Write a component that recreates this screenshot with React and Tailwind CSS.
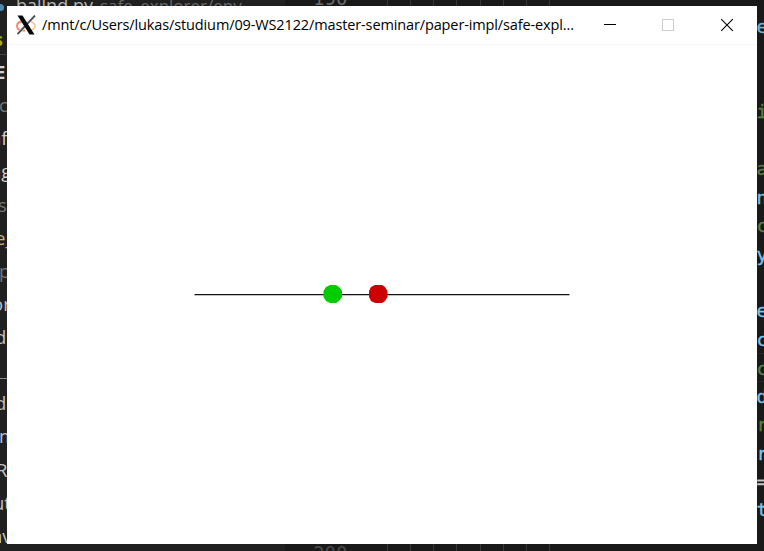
const SIDE_ROWS = [
  { text: 'E', className: '-indent-[5px] font-bold text-[#d4d4d4]' },
  { text: 'c', className: '-indent-[1px] text-[#747474]' },
  { text: 'af', className: '-indent-[9px] text-[#d0d0d0]' },
  { text: 'ag', className: '-indent-[9px] text-[#d0d0d0]' },
  { text: 's', className: '-indent-[2px] text-[#747474]' },
  { text: 'e_', className: '-indent-[5px] text-[#d2ad79]' },
  { text: 'p', className: '-indent-[1px] text-[#747474]' },
  { text: 'or', className: '-indent-[8px] text-[#c0c0c0]' },
  { text: 'd', className: '-indent-[5px] text-[#c0c0c0]' },
  { text: '', className: 'pt-[25px]' },
  { text: 'de', className: '-indent-[5px] text-[#c0c0c0]' },
  { text: 'm', className: '-indent-[1px] text-[#c0c0c0]' },
  { text: 'R', className: '-indent-[4px] text-[#c0c0c0]' },
  { text: 'ut', className: '-indent-[7px] text-[#c0c0c0]' },
  { text: 'nv', className: '-indent-[9px] text-[#c0c0c0]' },
];

const CODE_ROWS = [
  { text: 'e', className: 'text-[#6fb4d6]' },
  null,
  null,
  { text: 'i', className: 'text-[#57813f]' },
  null,
  { text: 'a', className: 'text-[#57813f]' },
  { text: 'n', className: 'text-[#7cc4ea]' },
  { text: 'c', className: 'text-[#57813f]' },
  { text: 'y', className: 'text-[#7cc4ea]' },
  null,
  { text: 'e', className: 'text-[#7cc4ea]' },
  { text: 'c', className: 'text-[#7cc4ea]' },
  { text: 'c', className: 'border-y border-[#252525] text-[#57813f]' },
  { text: 'd', className: 'text-[#7cc4ea]' },
  { text: 'r', className: 'text-[#57813f]' },
  { text: 'r', className: 'text-[#7cc4ea]' },
  { text: '=', className: 'text-[#c4c4c4]' },
  { text: 't', className: 'text-[#7cc4ea]' },
];

const GUIDES = [0, 1, 2, 3, 4, 5, 6, 7];

function Sidebar() {
  return (
    <aside className="flex w-[285px] shrink-0 flex-col overflow-hidden bg-[#202020] font-['Open_Sans','Noto_Sans',sans-serif]">
      <div className="flex h-6 shrink-0 items-start gap-[7px] whitespace-nowrap">
        <div className="mr-[5px] mt-1 h-[7px] w-1 rounded-r bg-[#4a8ab0]" />
        <span className="-mt-[7px] text-[18px] leading-6 text-[#b5b5b5]">ballnd.py</span>
        <span className="-mt-[6px] text-[17px] leading-6 text-[#686868]">safe_explorer/env</span>
      </div>
      <div className="h-[31px] shrink-0 border-b border-[#444] -indent-[6px] text-[18px] font-bold leading-[31px] text-[#9aad20]">s</div>
      {SIDE_ROWS.map((row, i) => (
        <div key={i} className={`h-[33.14px] shrink-0 whitespace-nowrap text-[18.5px] leading-[33px] ${row.className}`}>
          {row.text || <div className="h-px w-[7px] bg-[#8a8a8a]" />}
        </div>
      ))}
    </aside>
  );
}

function Editor() {
  return (
    <div className="flex flex-1 bg-[#191919] font-['DejaVu_Sans_Mono',monospace]">
      <div className="flex w-[102px] flex-col justify-between pl-[28px] text-[19px] leading-6 text-[#6a6a6a]">
        <span className="-mt-[14px]">190</span>
        <span className="-mb-[13px] h-[18px] overflow-hidden leading-[14px] text-[#484848]">200</span>
      </div>
      <div className="flex w-[370px] gap-[22.15px]">
        {GUIDES.map((n) => (
          <div key={n} className="h-full w-px bg-[#363636]" />
        ))}
      </div>
      <div className="w-[7px] overflow-hidden pt-[12px] -indent-[0.5px] text-[18.5px] leading-[29px]">
        {CODE_ROWS.map((row, i) => (
          <div key={i} className={`h-[28.45px] [-webkit-text-stroke:0.3px_currentColor] ${row ? row.className : ''}`}>
            {row && row.text}
          </div>
        ))}
      </div>
    </div>
  );
}

function XLogo() {
  return (
    <svg className="ml-[9px] h-5 w-5 shrink-0" viewBox="0 0 20 20" fill="none">
      <path d="M7.500 6.500C3 6.500 1 8.500 1 11c0 3 3 5 8 4.500" stroke="#f48765" strokeWidth="1.900" />
      <path d="M11 15.500c5 0 8-2 8-4.500s-3-5-7-4.500" stroke="#f7c58c" strokeWidth="1.700" />
      <path d="M18.800 0.500L1.500 19" stroke="#fff" strokeWidth="2.800" />
      <path d="M19 0.500L1.500 19.200" stroke="#505050" strokeWidth="1.900" />
      <path d="M1.500 0.500h5L18.500 19.500h-5z" fill="#080808" />
    </svg>
  );
}

function TitleBar() {
  return (
    <header className="flex h-[39px] items-center border-b border-[#f5f5f7] bg-white text-black">
      <XLogo />
      <span className="ml-[6px] shrink-0 whitespace-nowrap font-['Open_Sans','Noto_Sans',sans-serif] text-[14.5px] leading-5 tracking-[-0.125px]">
        /mnt/c/Users/lukas/studium/09-WS2122/master-seminar/paper-impl/safe-expl...
      </span>
      <svg className="ml-auto h-[38px] w-[168px] shrink-0" viewBox="589 6 168 38" fill="none" shapeRendering="crispEdges">
        <path d="M604 24.500h12" stroke="#000" />
        <rect x="662.500" y="19.500" width="11" height="11" stroke="#ccc" />
        <path d="M721.200 19.200l11.600 11.600m0-11.600l-11.600 11.600" stroke="#000" shapeRendering="auto" strokeWidth="1.100" />
      </svg>
    </header>
  );
}

function Plot() {
  return (
    <svg className="block h-[499px] w-[750px]" viewBox="7 45 750 499">
      <path d="M194.500 294.500h375" stroke="#111" strokeWidth="1.250" />
      <path d="M330 285h6l3 2 3 4v6l-3 4-3 2h-6l-4-2-2.500-4v-6l2.500-4z" fill="#00cc00" />
      <path d="M375 285h7l3 2 2.500 4v6l-2.500 4-3 2h-7l-4-2-2-4v-6l2-4z" fill="#cc0000" />
    </svg>
  );
}

export default function App() {
  return (
    <main className="relative flex h-[551px] w-[764px] overflow-hidden bg-[#1b1b1b]">
      <Sidebar />
      <Editor />
      <section className="absolute left-[7px] top-[6px] h-[538px] w-[750px] overflow-hidden bg-white">
        <TitleBar />
        <Plot />
      </section>
    </main>
  );
}
